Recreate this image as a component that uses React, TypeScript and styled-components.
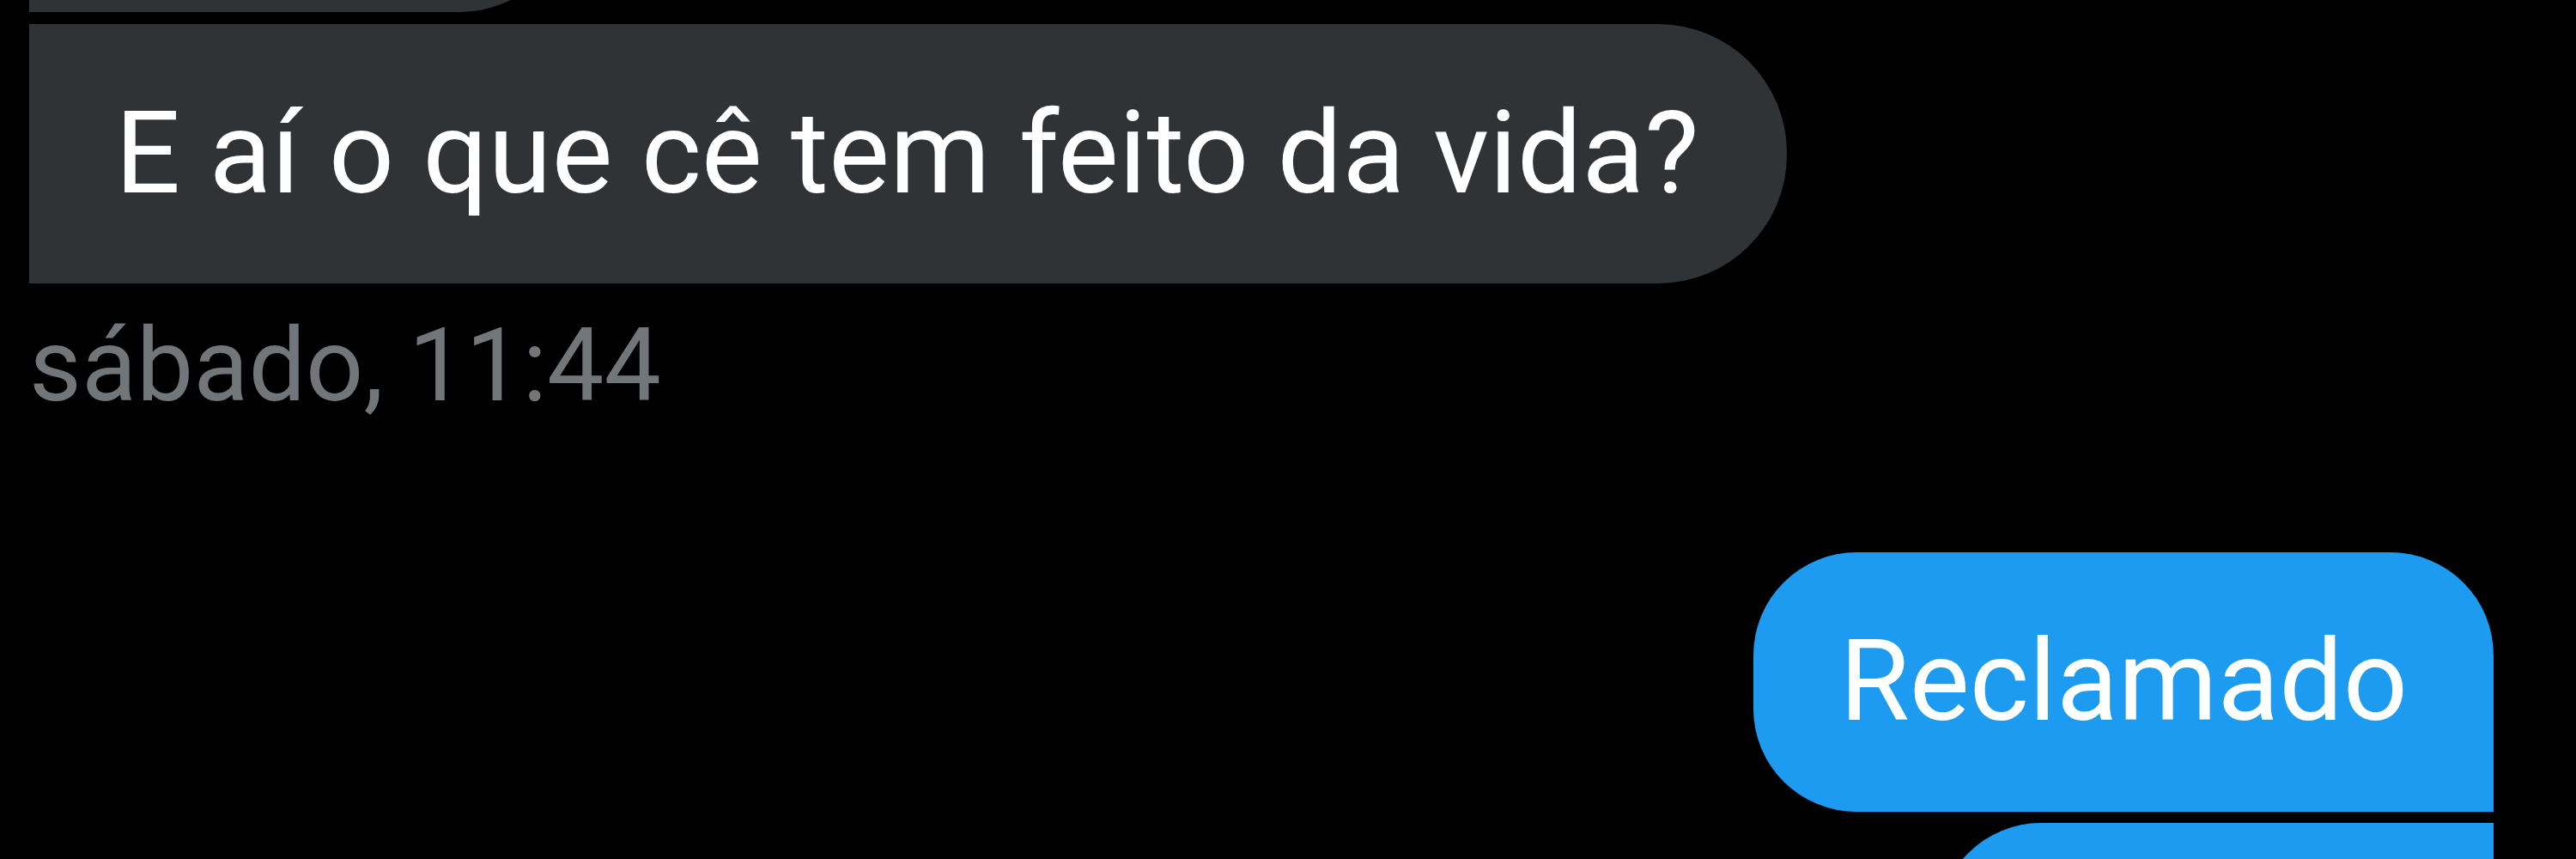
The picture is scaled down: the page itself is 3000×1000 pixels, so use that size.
import styled, { createGlobalStyle } from "styled-components";

const GlobalStyle = createGlobalStyle`
  html, body {
    margin: 0;
    padding: 0;
    background: #000;
    overflow: hidden;
  }
  body {
    font-family: Roboto, "Noto Sans", sans-serif;
  }
`;

const Screen = styled.div`
  width: 3000px;
  height: 1000px;
  overflow: hidden;
  background: #000;
`;

const Thread = styled.div`
  display: flex;
  flex-direction: column;
  padding: 0 96px 0 34px;
  margin-top: -288px;
`;

const Group = styled.div<{ $mine?: boolean }>`
  display: flex;
  flex-direction: column;
  align-items: ${(props) => (props.$mine ? "flex-end" : "flex-start")};
  gap: ${(props) => (props.$mine ? "13px" : "14px")};
`;

const Bubble = styled.div<{ $mine?: boolean; $radius: string }>`
  box-sizing: border-box;
  min-height: 302px;
  padding: ${(props) => (props.$mine ? "73px 100px" : "74px 102px 74px 100px")};
  font-size: ${(props) => (props.$mine ? "132px" : "134px")};
  line-height: 154px;
  color: #fff;
  white-space: nowrap;
  background: ${(props) => (props.$mine ? "#1d9bf0" : "#2f3336")};
  border-radius: ${(props) => props.$radius};
`;

// bubbles scrolled out of view: only their edge shows
const Clipped = styled(Bubble)<{ $width: number }>`
  width: ${(props) => props.$width}px;
`;

const Stamp = styled.div`
  margin-top: 26px;
  font-size: 118px;
  line-height: 140px;
  color: #71767b;
`;

const SentGroup = styled(Group)`
  margin-top: 147px;
`;

export default function App() {
  return (
    <Screen>
      <GlobalStyle />
      <Thread>
        <Group>
          <Clipped $radius="0 130px 130px 0" $width={632} />
          <Bubble $radius="0 150px 150px 0">E aí o que cê tem feito da vida?</Bubble>
        </Group>
        <Stamp>sábado, 11:44</Stamp>
        <SentGroup $mine>
          <Bubble $mine $radius="120px 120px 0 120px">Reclamado</Bubble>
          <Clipped $mine $radius="120px 0 0 120px" $width={647} />
        </SentGroup>
      </Thread>
    </Screen>
  );
}
